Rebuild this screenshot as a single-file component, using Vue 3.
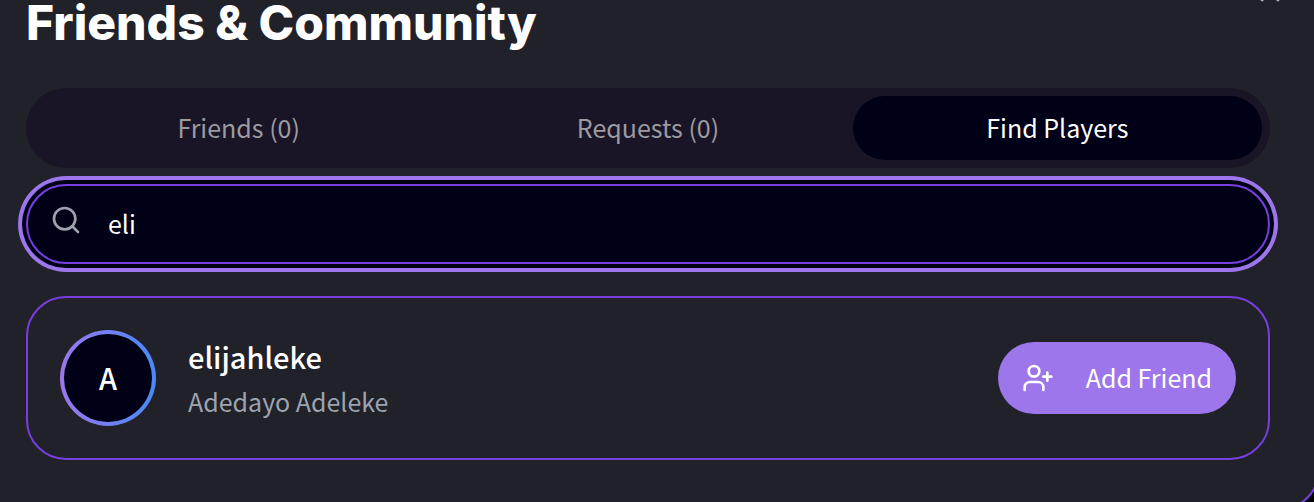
<script setup>
import { ref } from 'vue'

const tabs = [
  { id: 'friends', label: 'Friends (0)' },
  { id: 'requests', label: 'Requests (0)' },
  { id: 'find', label: 'Find Players' },
]
const active = ref('find')
const query = ref('eli')
const players = [{ username: 'elijahleke', name: 'Adedayo Adeleke', initial: 'A' }]
</script>

<template>
  <div class="screen">
    <section class="panel">
      <button class="close" type="button" aria-label="Close">
        <svg class="icon" viewBox="0 0 24 24"><path d="M18 6 6 18M6 6l12 12" /></svg>
      </button>
      <h1 class="title">Friends &amp; Community</h1>

      <div class="tabs" role="tablist">
        <button
          v-for="tab in tabs"
          :key="tab.id"
          class="tab"
          :class="{ active: active === tab.id }"
          type="button"
          role="tab"
          :aria-selected="active === tab.id"
          @click="active = tab.id"
        >{{ tab.label }}</button>
      </div>

      <div class="search">
        <svg class="icon search-icon" viewBox="0 0 24 24" aria-hidden="true">
          <circle cx="11" cy="11" r="8" />
          <path d="m21 21-4.3-4.3" />
        </svg>
        <input v-model="query" class="search-input" type="text" aria-label="Search players" />
      </div>

      <article v-for="player in players" :key="player.username" class="card">
        <div class="avatar"><span class="initial">{{ player.initial }}</span></div>
        <div class="info">
          <h2 class="username">{{ player.username }}</h2>
          <p class="name">{{ player.name }}</p>
        </div>
        <button class="add" type="button">
          <svg class="icon" viewBox="0 0 24 24" aria-hidden="true">
            <path d="M16 21v-2a4 4 0 0 0-4-4H6a4 4 0 0 0-4 4v2" />
            <circle cx="9" cy="7" r="4" />
            <path d="M19 8v6M22 11h-6" />
          </svg>
          <span class="add-label">Add Friend</span>
        </button>
      </article>
    </section>
  </div>
</template>

<style>
body {
  margin: 0;
  background: #000;
}
</style>

<style scoped>
.screen {
  height: 100vh;
  overflow: hidden;
  font-family: "Noto Sans CJK SC", "Noto Sans", sans-serif;
  font-size: 25px;
  line-height: 40px;
  color: #fff;
}
.screen * {
  box-sizing: border-box;
}
button,
input {
  font: inherit;
  color: inherit;
  border: 0;
  margin: 0;
}
button {
  cursor: pointer;
}
.panel {
  position: relative;
  margin: 0 -6px 0 -24px;
  padding: 0 48px 48px;
  border: 2px solid #773fe0;
  border-top: 0;
  border-radius: 0 0 40px 40px;
  background: #21212a;
}
.icon {
  display: block;
  flex: none;
  width: 32px;
  height: 32px;
  fill: none;
  stroke: currentColor;
  stroke-width: 2;
  stroke-linecap: round;
  stroke-linejoin: round;
}
.close {
  position: absolute;
  top: -24px;
  right: 32px;
  padding: 0;
  background: none;
  color: #b5b5ba;
}
.title {
  margin: 0;
  padding-bottom: 42px;
  font-family: Inter, sans-serif;
  font-size: 48px;
  font-weight: 800;
  line-height: 46px;
}
.tabs {
  display: grid;
  grid-template-columns: repeat(3, 1fr);
  padding: 8px;
  border-radius: 40px;
  background: #191526;
}
.tab {
  height: 64px;
  padding: 0 16px 2px;
  border-radius: 32px;
  background: none;
  color: #9c9ba1;
}
.tab.active {
  background: #000016;
  color: #fff;
}
.search {
  position: relative;
  margin-top: 16px;
}
.search-icon {
  position: absolute;
  top: 20px;
  left: 24px;
  color: #9ca3af;
}
.search-input {
  display: block;
  width: 100%;
  height: 80px;
  padding: 0 32px 2px 80px;
  border: 2px solid #773fe0;
  border-radius: 40px;
  outline: none;
  background: #000016;
  box-shadow: 0 0 0 4px #000016, 0 0 0 8px #9c76ea;
}
.card {
  display: flex;
  align-items: center;
  gap: 32px;
  margin-top: 32px;
  padding: 32px;
  border: 2px solid #773fe0;
  border-radius: 40px;
}
.avatar {
  flex: none;
  width: 96px;
  height: 96px;
  padding: 4px;
  border-radius: 50%;
  background: linear-gradient(90deg, #9c76ea, #4989fa);
}
.initial {
  display: flex;
  align-items: center;
  justify-content: center;
  height: 100%;
  padding-bottom: 2px;
  border-radius: 50%;
  background: #000016;
  font-size: 29px;
  font-weight: 500;
}
.info {
  flex: 1;
  min-width: 0;
  padding-bottom: 2px;
}
.username {
  margin: 0 0 2px;
  font-size: 29px;
  font-weight: 500;
  line-height: 46px;
}
.name {
  margin: 0;
  color: #9ca3af;
}
.add {
  display: flex;
  align-items: center;
  gap: 32px;
  height: 72px;
  padding: 0 24px;
  border-radius: 36px;
  background: #9c76ea;
}
.add-label {
  padding-bottom: 2px;
}
</style>
